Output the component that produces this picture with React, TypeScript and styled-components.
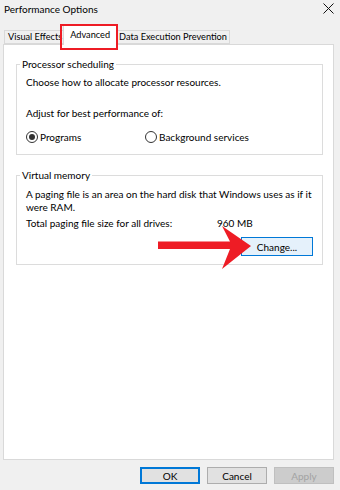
import React from "react";
import styled, { createGlobalStyle } from "styled-components";

const GlobalStyle = createGlobalStyle`
  html, body {
    margin: 0;
    padding: 0;
    background: #f0f0f0;
  }
  body {
    font-family: Lato, "Noto Sans", sans-serif;
    font-size: 10px;
    color: #000;
  }
`;

const Window = styled.div`
  width: 340px;
  height: 490px;
  display: flex;
  flex-direction: column;
  background: #f0f0f0;
  overflow: hidden;
`;

const TitleBar = styled.div`
  height: 17px;
  display: flex;
  align-items: center;
  justify-content: space-between;
  padding: 0 6px 0 4px;
`;

const Title = styled.span`
  font-size: 10px;
  line-height: 14px;
`;

const CloseButton = styled.div`
  width: 12px;
  height: 12px;
  display: flex;
  align-items: center;
  justify-content: center;
`;

const TabStrip = styled.div`
  height: 27px;
  display: flex;
  align-items: flex-end;
  padding-left: 4px;
  position: relative;
  z-index: 1;
`;

const Tab = styled.div<{ $selected?: boolean }>`
  position: relative;
  box-sizing: border-box;
  font-size: 9.2px;
  height: ${(p) => (p.$selected ? "20px" : "14px")};
  margin: ${(p) => (p.$selected ? "0 -2px -1px -2px" : "0")};
  padding: ${(p) => (p.$selected ? "3px 6px 0" : "0 2px 0 3px")};
  border: 1px solid #d9d9d9;
  border-bottom: ${(p) => (p.$selected ? "none" : "1px solid #d9d9d9")};
  background: ${(p) => (p.$selected ? "#ffffff" : "#f0f0f0")};
  z-index: ${(p) => (p.$selected ? 2 : 1)};
  line-height: 12px;
  white-space: nowrap;
`;

const Highlight = styled.div`
  position: absolute;
  left: -4px;
  right: -2px;
  top: -2px;
  bottom: -5px;
  border: 2px solid #ee1c25;
  pointer-events: none;
`;

const Panel = styled.div`
  flex: 1;
  margin: 0 6px 0 3px;
  border: 1px solid #d9d9d9;
  background: #ffffff;
  padding: 12px 10px 0 12px;
  display: flex;
  flex-direction: column;
`;

const Group = styled.fieldset<{ $spaced?: boolean }>`
  margin: ${(p) => (p.$spaced ? "13px 0 0 0" : "0")};
  padding: 0 9px 0 9px;
  border: 1px solid #dcdcdc;
  min-width: 0;
  display: flex;
  flex-direction: column;
`;

const Legend = styled.legend`
  margin-left: -6px;
  padding: 0 2px;
  line-height: 14px;
`;

const Line = styled.div<{ $top: number }>`
  margin-top: ${(p) => p.$top}px;
  line-height: 13px;
`;

const RadioRow = styled.div`
  margin-top: 10px;
  margin-bottom: 10px;
  display: grid;
  grid-template-columns: 119px auto;
  line-height: 14px;
`;

const RadioOption = styled.label`
  display: flex;
  align-items: center;
  gap: 2px;
`;

const RadioCircle = styled.span<{ $checked?: boolean }>`
  box-sizing: border-box;
  width: 12px;
  height: 12px;
  border-radius: 50%;
  border: 1px solid #333333;
  display: flex;
  align-items: center;
  justify-content: center;
  &::after {
    content: "";
    width: 6px;
    height: 6px;
    border-radius: 50%;
    background: ${(p) => (p.$checked ? "#333333" : "transparent")};
  }
`;

const InfoRow = styled.div`
  margin-top: 3px;
  display: grid;
  grid-template-columns: 191px auto;
  line-height: 13px;
`;

const ButtonRow = styled.div`
  position: relative;
  margin-top: 7px;
  margin-bottom: 8px;
  display: flex;
  justify-content: flex-end;
`;

const Button = styled.button<{ $variant?: "default" | "focus" | "disabled" | "hover" }>`
  box-sizing: border-box;
  font-family: inherit;
  font-size: 10px;
  line-height: 12px;
  padding: 0;
  height: ${(p) => (p.$variant === "hover" ? "19px" : "17px")};
  width: ${(p) => (p.$variant === "hover" ? "72px" : "60px")};
  color: ${(p) => (p.$variant === "disabled" ? "#a3a3a3" : "#000")};
  background: ${(p) =>
    p.$variant === "hover" ? "#e5f1fb" : p.$variant === "disabled" ? "#cccccc" : "#e1e1e1"};
  border: ${(p) =>
    p.$variant === "focus"
      ? "2px solid #0078d7"
      : p.$variant === "hover"
      ? "1px solid #0078d7"
      : p.$variant === "disabled"
      ? "1px solid #bfbfbf"
      : "1px solid #adadad"};
`;

const Arrow = styled.svg`
  position: absolute;
  left: 132px;
  top: -12px;
  width: 94px;
  height: 45px;
  pointer-events: none;
`;

const Footer = styled.div`
  height: 30px;
  box-sizing: border-box;
  padding: 7px 6px 0 0;
  display: flex;
  justify-content: flex-end;
  align-items: flex-start;
  gap: 7px;
`;

export default function App() {
  return (
    <>
      <GlobalStyle />
      <Window>
        <TitleBar>
          <Title>Performance Options</Title>
          <CloseButton>
            <svg width="11" height="11" viewBox="0 0 11 11">
              <path d="M0.5 0.5 L10.5 10.5 M10.5 0.5 L0.5 10.5" stroke="#111" strokeWidth="1" />
            </svg>
          </CloseButton>
        </TitleBar>
        <TabStrip>
          <Tab>Visual Effects</Tab>
          <Tab $selected>
            Advanced
            <Highlight />
          </Tab>
          <Tab>Data Execution Prevention</Tab>
        </TabStrip>
        <Panel>
          <Group>
            <Legend>Processor scheduling</Legend>
            <Line $top={5}>Choose how to allocate processor resources.</Line>
            <Line $top={18}>Adjust for best performance of:</Line>
            <RadioRow>
              <RadioOption>
                <RadioCircle $checked />
                Programs
              </RadioOption>
              <RadioOption>
                <RadioCircle />
                Background services
              </RadioOption>
            </RadioRow>
          </Group>
          <Group $spaced>
            <Legend>Virtual memory</Legend>
            <Line $top={6}>
              A paging file is an area on the hard disk that Windows uses as if it were RAM.
            </Line>
            <InfoRow>
              <span>Total paging file size for all drives:</span>
              <span>960 MB</span>
            </InfoRow>
            <ButtonRow>
              <Button $variant="hover">Change...</Button>
              <Arrow viewBox="0 0 94 45">
                <polygon
                  points="0,16.5 72,16.5 64,1 93,21 64,44 72,24 0,24"
                  fill="#ee1c25"
                />
              </Arrow>
            </ButtonRow>
          </Group>
        </Panel>
        <Footer>
          <Button $variant="focus">OK</Button>
          <Button>Cancel</Button>
          <Button $variant="disabled">Apply</Button>
        </Footer>
      </Window>
    </>
  );
}
